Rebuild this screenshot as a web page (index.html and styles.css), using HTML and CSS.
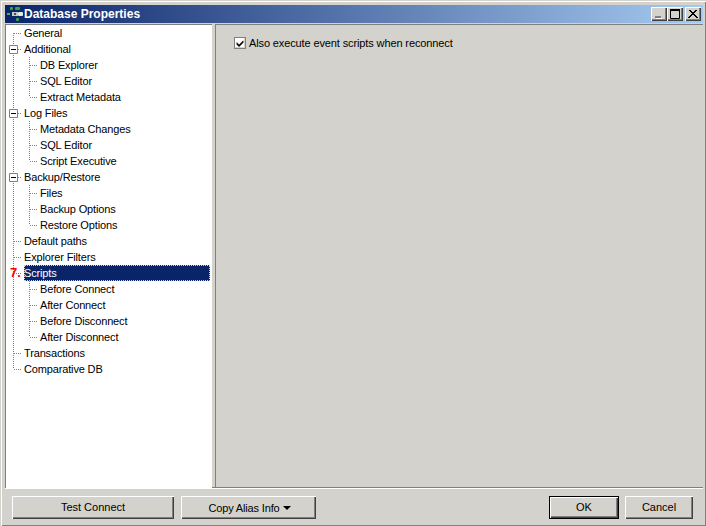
FILE: index.html
```html
<!DOCTYPE html>
<html lang="en">
<head>
<meta charset="utf-8">
<title>Database Properties</title>
<link rel="stylesheet" href="styles.css">
</head>
<body>
<div class="window">
  <header class="titlebar">
    <svg class="app-icon" width="16" height="16" viewBox="0 0 16 16">
      <rect x="3" y="1" width="3" height="3" rx="1" fill="#3aa63a"/>
      <rect x="8" y="1" width="5" height="3" rx="1" fill="#3aa63a"/>
      <rect x="0" y="7" width="3" height="2" fill="#45b845"/>
      <rect x="5" y="6" width="6" height="4" fill="#c8c8c8"/>
      <rect x="7" y="7" width="2" height="2" fill="#505050"/>
      <rect x="11" y="6" width="5" height="4" rx="1" fill="#dfeedd"/>
      <rect x="9" y="12" width="3" height="3" rx="1" fill="#3aa63a"/>
    </svg>
    <span class="title">Database Properties</span>
    <div class="caption-buttons">
      <button class="cap-btn"><svg width="14" height="12" viewBox="0 0 14 12"><rect x="3" y="8" width="6" height="2" fill="#808080"/><rect x="4" y="10" width="6" height="1" fill="#fff"/></svg></button>
      <button class="cap-btn"><svg width="14" height="12" viewBox="0 0 14 12"><path d="M2.500 2.500h9v8h-9z" fill="none" stroke="#000"/><rect x="2" y="1" width="10" height="2" fill="#000"/></svg></button>
      <button class="cap-btn cap-close"><svg width="14" height="12" viewBox="0 0 14 12"><path d="M3 2l8 8M4 2l8 8M11 2l-8 8M10 2l-8 8" stroke="#000" fill="none"/></svg></button>
    </div>
  </header>
  <main class="main">
    <nav class="tree">
      <svg class="connectors" width="40" height="360" viewBox="0 0 40 360">
        <g stroke="#808080" stroke-dasharray="1 1" fill="none">
          <path d="M7.500 8v336"/>
          <path d="M8 8.500h8M8 24.500h8M8 88.500h8M8 152.500h8M8 216.500h8M8 232.500h8M8 248.500h8M8 328.500h8M8 344.500h8"/>
          <path d="M23.500 32v40M24 40.500h8M24 56.500h8M24 72.500h8"/>
          <path d="M23.500 96v40M24 104.500h8M24 120.500h8M24 136.500h8"/>
          <path d="M23.500 160v40M24 168.500h8M24 184.500h8M24 200.500h8"/>
          <path d="M23.500 256v56M24 264.500h8M24 280.500h8M24 296.500h8M24 312.500h8"/>
        </g>
        <g>
          <path class="expander" d="M3.500 20.500h8v8h-8z"/><path d="M5 24.500h5" stroke="#000"/>
          <path class="expander" d="M3.500 84.500h8v8h-8z"/><path d="M5 88.500h5" stroke="#000"/>
          <path class="expander" d="M3.500 148.500h8v8h-8z"/><path d="M5 152.500h5" stroke="#000"/>
        </g>
      </svg>
      <div class="row">General</div>
      <div class="row">Additional</div>
      <div class="row sub">DB Explorer</div>
      <div class="row sub">SQL Editor</div>
      <div class="row sub">Extract Metadata</div>
      <div class="row">Log Files</div>
      <div class="row sub">Metadata Changes</div>
      <div class="row sub">SQL Editor</div>
      <div class="row sub">Script Executive</div>
      <div class="row">Backup/Restore</div>
      <div class="row sub">Files</div>
      <div class="row sub">Backup Options</div>
      <div class="row sub">Restore Options</div>
      <div class="row">Default paths</div>
      <div class="row">Explorer Filters</div>
      <div class="row selected"><span class="badge">7.</span>Scripts</div>
      <div class="row sub">Before Connect</div>
      <div class="row sub">After Connect</div>
      <div class="row sub">Before Disconnect</div>
      <div class="row sub">After Disconnect</div>
      <div class="row">Transactions</div>
      <div class="row">Comparative DB</div>
    </nav>
    <section class="panel">
      <label class="check">
        <span class="box"><svg width="11" height="11" viewBox="0 0 11 11"><path d="M2 4.500l2.500 2.500 4.500-4.500v2l-4.500 4.500-2.500-2.500z" fill="#000" stroke="#000" stroke-width=".5"/></svg></span>
        <span>Also execute event scripts when reconnect</span>
      </label>
    </section>
  </main>
  <footer class="footer">
    <button class="btn btn-test">Test Connect</button>
    <button class="btn btn-copy">Copy Alias Info<span class="arrow"></span></button>
    <span class="spacer"></span>
    <button class="btn btn-ok">OK</button>
    <button class="btn btn-cancel">Cancel</button>
  </footer>
</div>
</body>
</html>
```
FILE: styles.css
```css
* { box-sizing: border-box; }
html, body { margin: 0; padding: 0; }
body {
  width: 706px;
  height: 526px;
  overflow: hidden;
  background: #d4d2cc;
  font-family: "Liberation Sans", Arial, sans-serif;
  font-size: 11px;
  color: #000;
}
.window {
  width: 706px;
  height: 526px;
  display: flex;
  flex-direction: column;
  padding: 5px 3px 1px 5px;
  background: #d4d2cc;
  box-shadow: inset 1px 1px 0 #d4d2cc, inset 2px 2px 0 #fff, inset -1px -1px 0 #808080;
}
.titlebar {
  height: 18px;
  flex: none;
  display: flex;
  align-items: center;
  padding: 0 2px;
  background: linear-gradient(to right, #0a246a, #a6caf0);
  color: #fff;
}
.app-icon { flex: none; margin-right: 1px; }
.title { font-weight: bold; font-size: 12px; }
.caption-buttons { margin-left: auto; display: flex; align-items: center; }
.cap-btn {
  width: 16px;
  height: 14px;
  padding: 0;
  border: 0;
  background: #d4d2cc;
  display: flex;
  align-items: center;
  justify-content: center;
  box-shadow: inset 1px 1px 0 #fff, inset -1px -1px 0 #404040, inset -2px -2px 0 #808080;
}
.cap-close { margin-left: 2px; }
.main {
  flex: none;
  height: 464px;
  margin-top: 1px;
  display: flex;
}
.tree {
  position: relative;
  width: 207px;
  height: 100%;
  padding: 0 0 0 18px;
  background: #fff;
  border-left: 1px solid #808080;
  border-top: 1px solid #808080;
}
.connectors { position: absolute; left: 0; top: 0; pointer-events: none; }
.expander { fill: #fff; stroke: #808080; }
.row {
  position: relative;
  height: 16px;
  line-height: 16px;
  width: 186px;
  white-space: nowrap;
  letter-spacing: -0.15px;
}
.row.sub { margin-left: 16px; width: 170px; }
.row.selected {
  background: #0a246a;
  color: #fff;
  outline: 1px dotted #d4d2cc;
  outline-offset: -1px;
}
.badge {
  position: absolute;
  left: -14px;
  top: 0;
  color: #f00;
  font-weight: bold;
  font-size: 13px;
  letter-spacing: 0;
}
.panel {
  flex: 1;
  margin-left: 3px;
  padding: 11px 0 0 18px;
  border-left: 1px solid #808080;
  border-top: 1px solid #808080;
  background: #d4d2cc;
}
.check { display: flex; align-items: center; gap: 3px; letter-spacing: -0.12px; height: 14px; }
.box {
  width: 12px;
  height: 12px;
  background: #fff;
  border: 1px solid #808080;
  display: flex;
  align-items: center;
  justify-content: center;
  box-shadow: inset -1px -1px 0 #d4d2cc;
}
.footer {
  flex: 1;
  display: flex;
  align-items: flex-start;
  padding: 7px 10px 0 7px;
  border-top: 1px solid #fff;
  box-shadow: 0 -1px 0 #808080;
}
.btn {
  height: 23px;
  padding: 0 0 2px;
  border: 0;
  background: #d4d2cc;
  font-family: "Liberation Sans", Arial, sans-serif;
  font-size: 11px;
  color: #000;
  box-shadow: inset 1px 1px 0 #fff, inset -1px -1px 0 #404040, inset -2px -2px 0 #808080;
}
.btn-test { width: 162px; }
.btn-copy { width: 135px; margin-left: 7px; padding: 0 0 0 2px; letter-spacing: -0.15px; }
.arrow {
  display: inline-block;
  margin-left: 3px;
  vertical-align: 2px;
  border-left: 4px solid transparent;
  border-right: 4px solid transparent;
  border-top: 4px solid #000;
}
.spacer { flex: 1; }
.btn-ok { width: 70px; border: 1px solid #000; }
.btn-cancel { width: 68px; margin-left: 6px; }
```
